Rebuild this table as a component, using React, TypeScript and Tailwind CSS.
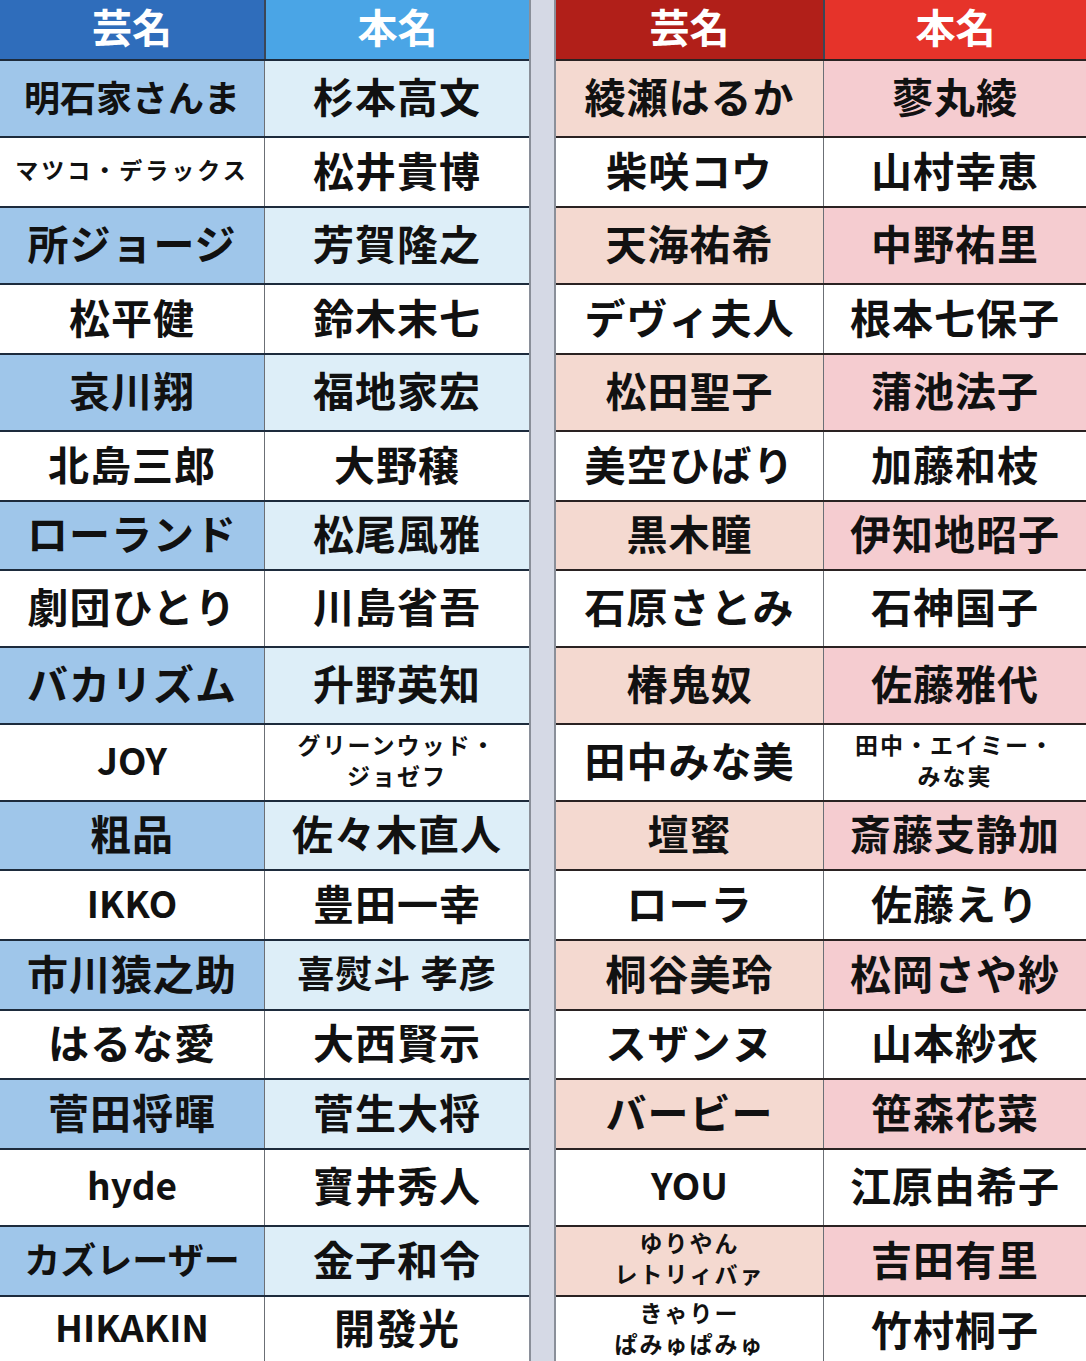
import React from "react";

type Kind = "n" | "m" | "w" | "l" | "s" | "x";
type Cell = { t: string; k?: Kind };
type Row = [Cell, Cell];

const H = [77, 70, 77, 70, 77, 70, 69, 77, 77, 77, 69, 70, 70, 69, 70, 77, 70, 66];
const HC: Record<number, string> = {
  77: "h-[77px]",
  70: "h-[70px]",
  69: "h-[69px]",
  66: "h-[66px]",
};

const kindClass: Record<Kind, string> = {
  n: "text-[41px] leading-none tracking-[1px]",
  m: "text-[36px] leading-none",
  w: "text-[37px] leading-none tracking-[1px] whitespace-pre",
  l: "text-[37px] leading-none",
  s: "text-[23px] leading-[31px] tracking-[2px]",
  x: "text-[23px] leading-none tracking-[3px]",
};

const left: Row[] = [
  [{ t: "明石家さんま", k: "m" }, { t: "杉本高文" }],
  [{ t: "マツコ・デラックス", k: "x" }, { t: "松井貴博" }],
  [{ t: "所ジョージ" }, { t: "芳賀隆之" }],
  [{ t: "松平健" }, { t: "鈴木末七" }],
  [{ t: "哀川翔" }, { t: "福地家宏" }],
  [{ t: "北島三郎" }, { t: "大野穣" }],
  [{ t: "ローランド" }, { t: "松尾風雅" }],
  [{ t: "劇団ひとり" }, { t: "川島省吾" }],
  [{ t: "バカリズム" }, { t: "升野英知" }],
  [{ t: "JOY", k: "l" }, { t: "グリーンウッド・\nジョゼフ", k: "s" }],
  [{ t: "粗品" }, { t: "佐々木直人" }],
  [{ t: "IKKO", k: "l" }, { t: "豊田一幸" }],
  [{ t: "市川猿之助" }, { t: "喜熨斗 孝彦", k: "w" }],
  [{ t: "はるな愛" }, { t: "大西賢示" }],
  [{ t: "菅田将暉" }, { t: "菅生大将" }],
  [{ t: "hyde", k: "l" }, { t: "寶井秀人" }],
  [{ t: "カズレーザー", k: "m" }, { t: "金子和令" }],
  [{ t: "HIKAKIN", k: "l" }, { t: "開發光" }],
];

const right: Row[] = [
  [{ t: "綾瀬はるか" }, { t: "蓼丸綾" }],
  [{ t: "柴咲コウ" }, { t: "山村幸恵" }],
  [{ t: "天海祐希" }, { t: "中野祐里" }],
  [{ t: "デヴィ夫人" }, { t: "根本七保子" }],
  [{ t: "松田聖子" }, { t: "蒲池法子" }],
  [{ t: "美空ひばり" }, { t: "加藤和枝" }],
  [{ t: "黒木瞳" }, { t: "伊知地昭子" }],
  [{ t: "石原さとみ" }, { t: "石神国子" }],
  [{ t: "椿鬼奴" }, { t: "佐藤雅代" }],
  [{ t: "田中みな美" }, { t: "田中・エイミー・\nみな実", k: "s" }],
  [{ t: "壇蜜" }, { t: "斎藤支静加" }],
  [{ t: "ローラ" }, { t: "佐藤えり" }],
  [{ t: "桐谷美玲" }, { t: "松岡さや紗" }],
  [{ t: "スザンヌ" }, { t: "山本紗衣" }],
  [{ t: "バービー" }, { t: "笹森花菜" }],
  [{ t: "YOU", k: "l" }, { t: "江原由希子" }],
  [{ t: "ゆりやん\nレトリィバァ", k: "s" }, { t: "吉田有里" }],
  [{ t: "きゃりー\nぱみゅぱみゅ", k: "s" }, { t: "竹村桐子" }],
];

function CellText({ c }: { c: Cell }) {
  const k = c.k ?? "n";
  const lines = c.t.split("\n");
  return (
    <div className={`text-center font-bold text-[#111] ${kindClass[k]}`}>
      {lines.map((l, i) => (
        <div key={i}>{l}</div>
      ))}
    </div>
  );
}

function Table({
  rows,
  theme,
  side,
}: {
  rows: Row[];
  theme: "blue" | "red";
  side: "left" | "right";
}) {
  const blue = theme === "blue";
  const h1 = blue ? "bg-[#2f6dbb]" : "bg-[#b11f19]";
  const h2 = blue ? "bg-[#4aa5e6]" : "bg-[#e6332a]";
  const s1 = blue ? "bg-[#9fc6ea]" : "bg-[#f4d9d0]";
  const s2 = blue ? "bg-[#ddeef8]" : "bg-[#f5ccd0]";
  const line = blue ? "border-[#1d2b3c]" : "border-[#2a2222]";
  const cols = side === "left" ? "grid-cols-[264px_1fr]" : "grid-cols-[267px_1fr]";
  const outer =
    side === "left"
      ? "border-r-2 border-[#8a8f99]"
      : "border-l-2 border-[#8a8f99]";
  return (
    <div className={`flex-1 flex flex-col ${outer}`}>
      <div className={`grid ${cols} h-[59px]`}>
        <div className={`${h1} flex items-start justify-center`}>
          <span className="text-white font-bold text-[40px] leading-[52px]">芸名</span>
        </div>
        <div className={`${h2} flex items-start justify-center border-l-2 border-[#3c4656]`}>
          <span className="text-white font-bold text-[40px] leading-[52px]">本名</span>
        </div>
      </div>
      {rows.map((r, i) => {
        const shaded = i % 2 === 0;
        return (
          <div
            key={i}
            className={`grid ${cols} ${HC[H[i]]} border-t-2 ${line}`}
          >
            <div
              className={`${shaded ? s1 : "bg-white"} flex items-center justify-center pb-[6px]`}
            >
              <CellText c={r[0]} />
            </div>
            <div
              className={`${shaded ? s2 : "bg-white"} flex items-center justify-center pb-[6px] border-l-[1.5px] border-[#6b6f75]`}
            >
              <CellText c={r[1]} />
            </div>
          </div>
        );
      })}
    </div>
  );
}

export default function App() {
  return (
    <div
      className="w-[1086px] h-[1361px] overflow-hidden flex bg-white"
      style={{ fontFamily: '"Noto Sans CJK JP", "Noto Sans", sans-serif' }}
    >
      <div className="w-[531px] flex">
        <Table rows={left} theme="blue" side="left" />
      </div>
      <div className="w-[23px] bg-[#d5d9e5]" />
      <div className="w-[532px] flex">
        <Table rows={right} theme="red" side="right" />
      </div>
    </div>
  );
}
